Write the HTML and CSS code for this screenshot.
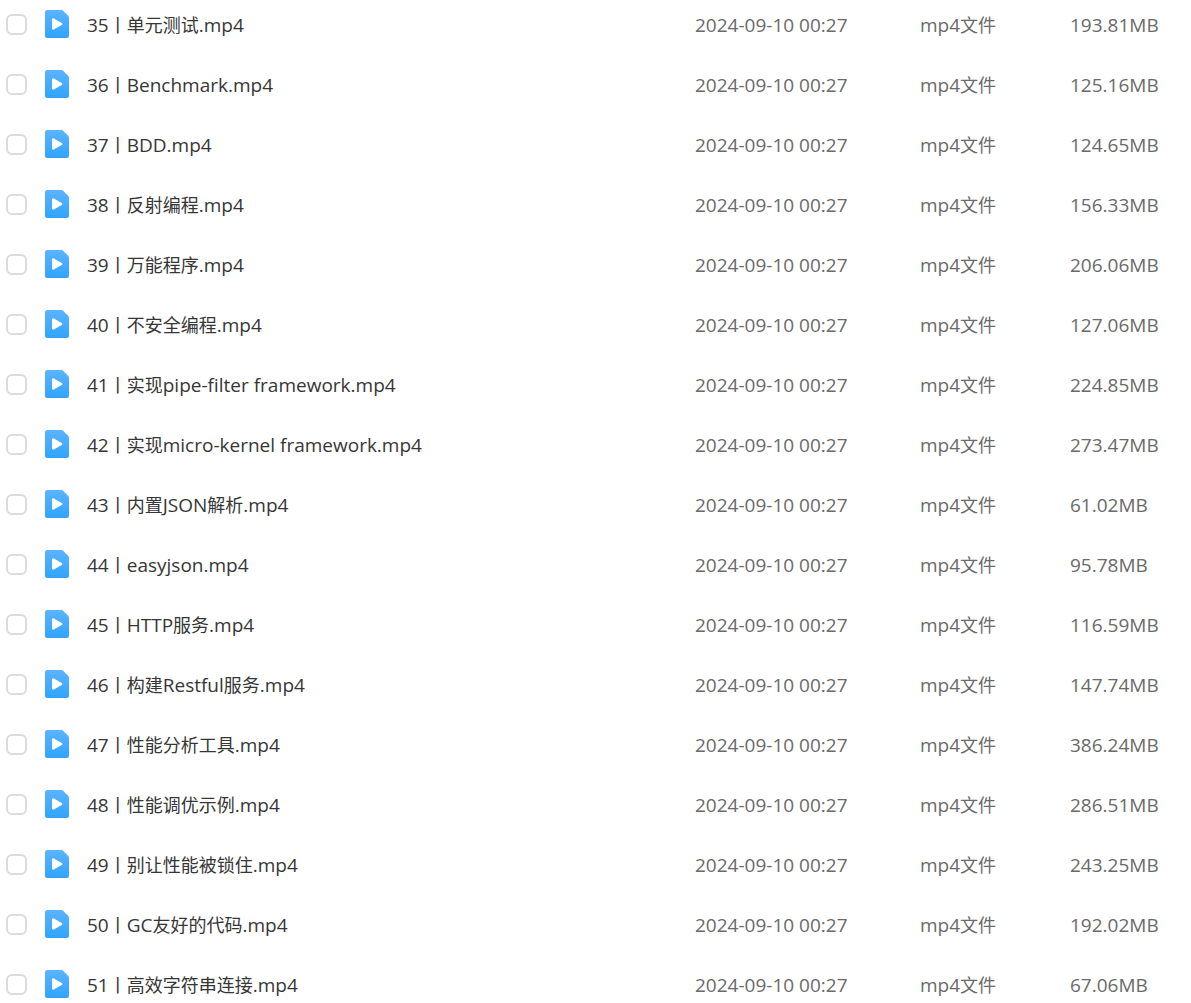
FILE: index.html
```html
<!DOCTYPE html>
<html lang="zh-CN">
<head>
  <meta charset="UTF-8">
  <meta name="viewport" content="width=device-width, initial-scale=1.0">
  <link rel="stylesheet" href="styles.css">
  <title>文件列表</title>
</head>
<body>
  <svg class="icon-defs" aria-hidden="true">
    <defs>
      <linearGradient id="fileBlue" x1="0" y1="0" x2="0" y2="1">
        <stop offset="0" stop-color="#5cb3ff"/>
        <stop offset="1" stop-color="#30a4ff"/>
      </linearGradient>
      <symbol id="videoFile" viewBox="0 0 24 28">
        <path fill="url(#fileBlue)" d="M2.500 0H16.200a3 3 0 0 1 2.100.900L23.100 5.700a3 3 0 0 1 .900 2.100V25.500a2.500 2.500 0 0 1-2.500 2.500H2.500A2.500 2.500 0 0 1 0 25.500V2.500A2.500 2.500 0 0 1 2.500 0Z"/>
        <path fill="#fff" d="M7 9.500a1.200 1.200 0 0 1 1.800-1l7.900 4.500a1.200 1.200 0 0 1 0 2l-7.900 4.500A1.200 1.200 0 0 1 7 18.500Z"/>
      </symbol>
    </defs>
  </svg>

  <table class="file-table">
    <colgroup>
      <col class="col-check">
      <col class="col-name">
      <col class="col-date">
      <col class="col-type">
      <col class="col-size">
    </colgroup>
    <tbody id="fileList"></tbody>
  </table>

  <script src="files.js"></script>
</body>
</html>
```

FILE: styles.css
```css
body {
  margin: 0;
  height: 100vh;
  overflow: hidden;
  background-color: #fff;
  color: #6a6a6a;
  font-family: "Open Sans", "Noto Sans CJK SC", sans-serif;
  font-size: 19px;
  line-height: 28px;
}

.icon-defs {
  display: block;
  width: 0;
  height: 0;
}

.file-table {
  width: 100%;
  margin-top: -6px; /* list is scrolled a little under the top edge */
  table-layout: fixed;
  border-collapse: collapse;
}

.col-check {
  width: 45px;
}

.col-date {
  width: 225px;
}

.col-type {
  width: 150px;
}

.col-size {
  width: 121px;
}

.file-table td {
  height: 60px;
  padding: 0;
  vertical-align: middle;
  white-space: nowrap;
}

.file-table .check {
  padding-left: 6px;
}

.check input {
  appearance: none;
  display: block;
  box-sizing: border-box;
  width: 21px;
  height: 21px;
  margin: 0;
  border: 2px solid #dcdcdc;
  border-radius: 6px;
  background-color: #fff;
  cursor: pointer;
}

.check input:checked {
  border-color: #30a4ff;
  background-color: #30a4ff;
}

.name label {
  display: flex;
  align-items: center;
  gap: 18px;
  color: #363636;
  cursor: pointer;
}

.file-icon {
  flex: none;
  width: 24px;
  height: 28px;
}

.file-name,
.file-table .info {
  padding-top: 2px;
}

.file-table .info {
  height: 58px;
}

/* Chinese text is set slightly smaller than the latin text */
.han {
  font-size: 18px;
}
```

FILE: files.js
```js
var files = [
  ['35丨单元测试.mp4', '193.81MB'],
  ['36丨Benchmark.mp4', '125.16MB'],
  ['37丨BDD.mp4', '124.65MB'],
  ['38丨反射编程.mp4', '156.33MB'],
  ['39丨万能程序.mp4', '206.06MB'],
  ['40丨不安全编程.mp4', '127.06MB'],
  ['41丨实现pipe-filter framework.mp4', '224.85MB'],
  ['42丨实现micro-kernel framework.mp4', '273.47MB'],
  ['43丨内置JSON解析.mp4', '61.02MB'],
  ['44丨easyjson.mp4', '95.78MB'],
  ['45丨HTTP服务.mp4', '116.59MB'],
  ['46丨构建Restful服务.mp4', '147.74MB'],
  ['47丨性能分析工具.mp4', '386.24MB'],
  ['48丨性能调优示例.mp4', '286.51MB'],
  ['49丨别让性能被锁住.mp4', '243.25MB'],
  ['50丨GC友好的代码.mp4', '192.02MB'],
  ['51丨高效字符串连接.mp4', '67.06MB']
];

// Wrap runs of Chinese characters so they can be sized on their own
function wrapHan(text) {
  return text.replace(/[\u4e00-\u9fff]+/g, '<span class="han">$&</span>');
}

document.getElementById('fileList').innerHTML = files.map(function (file, i) {
  var id = 'file' + i;
  return '<tr>' +
    '<td class="check"><input type="checkbox" id="' + id + '"></td>' +
    '<td class="name"><label for="' + id + '">' +
      '<svg class="file-icon" aria-hidden="true"><use href="#videoFile"/></svg>' +
      '<span class="file-name">' + wrapHan(file[0]) + '</span>' +
    '</label></td>' +
    '<td class="info">2024-09-10 00:27</td>' +
    '<td class="info">' + wrapHan('mp4文件') + '</td>' +
    '<td class="info">' + file[1] + '</td>' +
  '</tr>';
}).join('');
```
